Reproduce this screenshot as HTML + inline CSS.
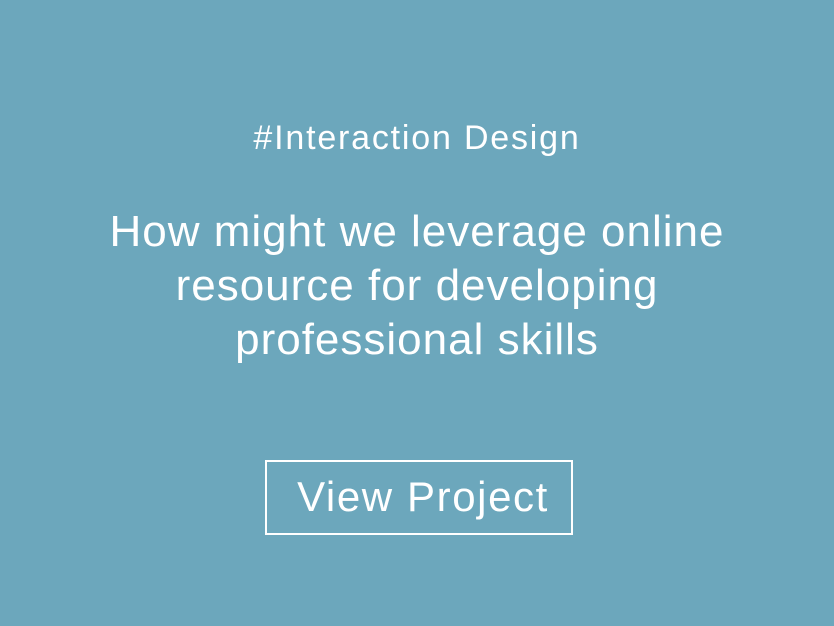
<!DOCTYPE html>
<html><head><meta charset="utf-8"><style>
html,body{margin:0;padding:0;}
body{width:834px;height:626px;background:#6ca7bc;font-family:"Liberation Sans",sans-serif;color:#fff;position:relative;overflow:hidden;}
.tag{position:absolute;top:116px;left:0;width:834px;text-align:center;font-size:34px;line-height:44px;letter-spacing:1.8px;}
.q{position:absolute;top:205px;left:0;width:834px;text-align:center;font-size:44px;line-height:54px;letter-spacing:1px;}
.btn{position:absolute;left:265px;top:460px;width:304px;height:71px;border:2px solid #fff;text-align:center;font-size:42px;line-height:69px;letter-spacing:1.6px;padding-left:8px;box-sizing:content-box;width:296px;}
</style></head><body>
<div class="tag">#Interaction Design</div>
<div class="q">How might we leverage online<br>resource for developing<br>professional skills</div>
<div class="btn">View Project</div>
</body></html>
